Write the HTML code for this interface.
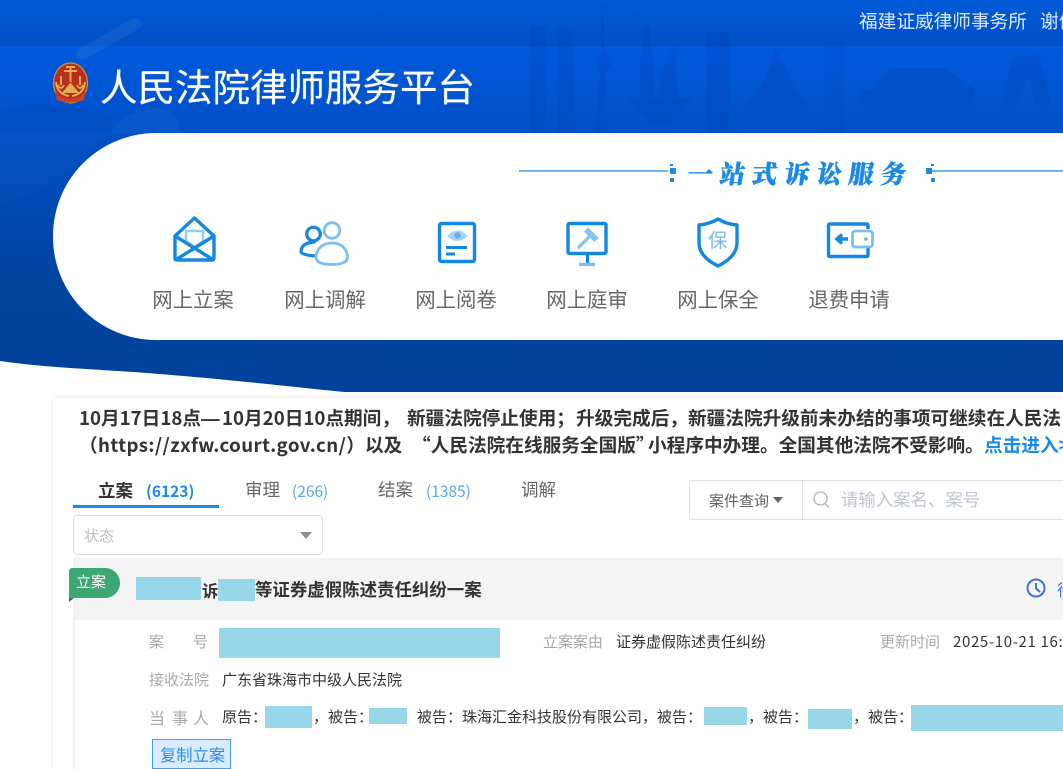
<!DOCTYPE html>
<html lang="zh-CN"><head><meta charset="utf-8"><title>人民法院律师服务平台</title>
<style>
html,body{margin:0;padding:0;background:#fff;width:1063px;height:769px;overflow:hidden}
#w{position:relative;width:1063px;height:769px;overflow:hidden;font-family:"Liberation Sans","Noto Sans CJK SC",sans-serif;color:#333;filter:blur(.35px)}
.a{position:absolute}
.t{position:absolute;white-space:nowrap;line-height:24px;font-family:"Noto Sans CJK SC","Liberation Sans",sans-serif}
.r{position:absolute;background:#97d7e9}
.l{font-size:20.4px;color:#666;top:286px;width:100px;text-align:center}
.g{color:#a9a9a9;font-size:15px}
.d{color:#333;font-size:15px}
.n{font-size:18.67px;font-weight:700;color:#333}
</style></head><body><div id="w">
<svg class="a" style="left:0;top:0" width="1063" height="400" viewBox="0 0 1063 400">
<defs>
<linearGradient id="b1" x1="0" y1="0" x2="0" y2="1"><stop offset="0" stop-color="#005ad8"/><stop offset="1" stop-color="#004fc6"/></linearGradient>
<linearGradient id="b2" x1="0" y1="0" x2="0" y2="1"><stop offset="0" stop-color="#0059dc"/><stop offset=".28" stop-color="#004fc4"/><stop offset=".65" stop-color="#00449f"/><stop offset="1" stop-color="#00429a"/></linearGradient>
</defs>
<path d="M0 46H1063V392H345C300 388 230 379 133 372C90 369 40 367 0 361Z" fill="url(#b2)"/>
<rect width="1063" height="46" fill="url(#b1)"/>
<path d="M0 205Q60 190 120 120L0 120Z" fill="#fff" opacity=".015"/>
<path d="M82 54L135 24" stroke="#fff" stroke-opacity=".06" stroke-width="12" stroke-linecap="round"/>
<path d="M110 133C120 118 140 108 160 108C175 112 180 122 178 133Z" fill="#fff" opacity=".035"/>
<path d="M0 133V112Q60 95 112 120V133Z" fill="#003c9c" opacity=".14"/>
<g fill="#002f9a" opacity=".13">
<rect x="530" y="25" width="15" height="108"/><path d="M557 26L572 32L576 133H558Z"/>
<path d="M602 5L604 5L605 50Q612 55 610 66L605 72L608 133H595L600 72Q593 60 601 50Z"/>
<path d="M640 70L644 25L649 25L654 70L653 105H640Z"/><path d="M660 75L675 45L678 115H660Z"/>
<path d="M628 98H692L672 122H650Z"/><rect x="707" y="32" width="22" height="100"/>
<path d="M775 50L770 65L760 90L745 105H810L795 90L785 65Z"/>
<path d="M825 42H844V133H825Z" opacity=".6"/><path d="M872 90L890 68H945L975 90V105H860V90Z"/>
<path d="M1000 105L1013 57L1040 55L1050 105H1035L1030 75L1015 105Z"/>
</g>
<rect x="53" y="133" width="1200" height="207" rx="103" fill="#fff"/>
<!-- emblem -->
<ellipse cx="70.500" cy="83" rx="17" ry="20" fill="#b8301c" stroke="#c9923c" stroke-width="1.200"/>
<path d="M55 92Q70 106 86 92L84 100Q70 105 57 100Z" fill="#c9402a"/>
<g stroke="#e2ad55" stroke-width="1.900" fill="none"><path d="M70.500 66V82M64 71H77M66 67H75"/><path d="M61 76V85M80 76V85"/><path d="M58 85Q61 91 64 85M77 85Q80 91 83 85"/><path d="M64 92L70.500 84L77 92Z" fill="#e2ad55"/><path d="M56 82Q57 94 69 96M85 82Q84 94 72 96"/></g>
<!-- divider -->
<g stroke="#1a8ae6" stroke-width="1.300"><path d="M519 171H668M928 171H1063"/></g>
<g fill="#1a8ae6"><rect x="670" y="168" width="6" height="6"/><rect x="670" y="178" width="4" height="4"/><rect x="670" y="164" width="3" height="2"/><rect x="926" y="168" width="6" height="6"/><rect x="931" y="178" width="4" height="4"/><rect x="931" y="164" width="3" height="2"/></g>
<!-- envelope -->
<path d="M186 241V231H203V241L194.500 247Z" fill="#fff" stroke="#95cdf8" stroke-width="2.500"/>
<g fill="none" stroke="#1488e0" stroke-width="3.400" stroke-linejoin="round" stroke-linecap="round"><path d="M175 236L194.500 218L214 236V258Q214 260 212 260H177Q175 260 175 258Z"/><path d="M175 236L212 259M214 236L177 259"/></g>
<!-- people -->
<circle cx="313.500" cy="234" r="6.800" fill="none" stroke="#1488e0" stroke-width="3.200"/>
<path d="M314 242Q301 243 301 252Q302 255 316 256" fill="none" stroke="#1488e0" stroke-width="3.200" stroke-linecap="round"/>
<circle cx="332" cy="230.500" r="7.800" fill="#fff" stroke="#79bff7" stroke-width="2.800"/>
<path d="M332 243C320 243 316 252 316 257C316 262 321 264.500 332 264.500C343 264.500 347.500 262 347.500 257C347.500 252 344 243 332 243Z" fill="#fff" stroke="#79bff7" stroke-width="2.800"/>
<!-- doc -->
<rect x="439.500" y="223.500" width="35" height="38" rx="2" fill="none" stroke="#1488e0" stroke-width="3.400"/>
<path d="M447 236Q457 225 468 236Q457 246 447 236Z" fill="#a6d5fa"/><circle cx="457.500" cy="235.500" r="3.200" fill="#5fb0f2"/>
<path d="M446 247.500H467" stroke="#1488e0" stroke-width="3"/><path d="M446 254H455" stroke="#1488e0" stroke-width="3"/>
<!-- monitor -->
<rect x="568" y="223.500" width="38" height="30" rx="1.500" fill="none" stroke="#1488e0" stroke-width="3.400"/>
<path d="M587.500 255V263" stroke="#1488e0" stroke-width="3"/><path d="M579 264.500H595" stroke="#79bff7" stroke-width="3.200"/>
<g stroke="#85c5f8" fill="none"><path d="M586 229.500L596.500 240" stroke-width="6"/><path d="M590 236L579 247" stroke-width="3.400" stroke-linecap="round"/></g>
<!-- shield -->
<path d="M718 219Q726 224 737 225V243C737 254 728 261 718 266C708 261 699 254 699 243V225Q710 224 718 219Z" fill="none" stroke="#1488e0" stroke-width="3.400" stroke-linejoin="round"/>
<text x="708" y="247" font-size="19.500" fill="#72baf6" font-family="Noto Sans CJK SC">保</text>
<!-- wallet -->
<path d="M868 229V225Q868 224 866 224H830Q828.500 224 828.500 226V255Q828.500 256.500 830 256.500H866Q868 256.500 868 255V248" fill="none" stroke="#1488e0" stroke-width="3.400"/>
<rect x="852.500" y="231" width="20" height="16" rx="3" fill="#fff" stroke="#79bff7" stroke-width="2.800"/>
<circle cx="866" cy="239" r="1.800" fill="#5fb0f2"/>
<path d="M848 239H838M842 234.500L837 239L842 243.500" fill="none" stroke="#1488e0" stroke-width="3.400"/>
</svg>

<div class="t" style="left:100px;top:61px;font-size:37.500px;line-height:48px;color:#fff;font-weight:400;text-shadow:0 0 .6px #fff">人民法院律师服务平台</div>
<div class="t" style="left:859px;top:9px;font-size:18.670px;color:#dbe8fa">福建证威律师事务所</div>
<div class="t" style="left:1040px;top:9px;font-size:18.670px;color:#dbe8fa">谢伟</div>
<div class="t" style="left:688px;top:158px;font-size:25px;line-height:30px;font-weight:900;color:#1a8ae6;letter-spacing:7.200px;font-family:'Noto Serif CJK SC',serif;transform:skewX(-8deg);-webkit-text-stroke:.5px #1a8ae6">一站式诉讼服务</div>

<div class="t l" style="left:143px">网上立案</div>
<div class="t l" style="left:275px">网上调解</div>
<div class="t l" style="left:406px">网上阅卷</div>
<div class="t l" style="left:537px">网上庭审</div>
<div class="t l" style="left:668px">网上保全</div>
<div class="t l" style="left:799px">退费申请</div>

<div class="a" style="left:53px;top:398px;width:1010px;height:371px;background:#fff;box-shadow:0 0 5px rgba(0,0,0,.1)"></div>
<div class="t n" style="left:79px;top:406px">10月17日18点<span style="font-family:'Liberation Sans';display:inline-block;width:21px">—</span>10月20日10点期间，</div>
<div class="t n" style="left:407px;top:406px">新疆法院停止使用；</div>
<div class="t n" style="left:576px;top:406px">升级完成后，新疆法院升级前未办结的事项可继续在人民法</div>
<div class="t n" style="left:79px;top:433px;letter-spacing:.4px">（https://zxfw.court.gov.cn/）</div>
<div class="t n" style="left:365px;top:433px">以及</div>
<div class="t n" style="left:412px;top:433px">“人民法院在线服务全国版”</div>
<div class="t n" style="left:648px;top:433px">小程序中办理。全国其他法院不受影响。</div>
<div class="t n" style="left:984px;top:433px;color:#1a8ae6">点击进入&gt;</div>

<div class="t" style="left:98px;top:479px;font-size:17.500px;font-weight:700;color:#333">立案</div>
<div class="t" style="left:146px;top:479px;font-size:15.500px;font-weight:700;color:#1a8ae6">(6123)</div>
<div class="a" style="left:73px;top:505px;width:146px;height:3px;background:#1a8ae6"></div>
<div class="t" style="left:245px;top:478px;font-size:17.500px;color:#666">审理</div>
<div class="t" style="left:292px;top:479px;font-size:15.500px;color:#5aa6e8">(266)</div>
<div class="t" style="left:378px;top:478px;font-size:17.500px;color:#666">结案</div>
<div class="t" style="left:426px;top:479px;font-size:15.500px;color:#5aa6e8">(1385)</div>
<div class="t" style="left:521px;top:478px;font-size:17.500px;color:#666">调解</div>

<div class="a" style="left:73px;top:515px;width:248px;height:38px;border:1px solid #dcdfe6;border-radius:4px;background:#fff"></div>
<div class="t" style="left:84px;top:524px;font-size:15px;color:#bdbdbd">状态</div>
<div class="a" style="left:300px;top:532px;width:0;height:0;border-left:6.500px solid transparent;border-right:6.500px solid transparent;border-top:7px solid #8b8f99"></div>

<div class="a" style="left:689px;top:480px;width:372px;height:38px;border:1px solid #dcdfe6;border-right:0;border-radius:4px 0 0 4px;background:#fff;width:374px"></div>
<div class="a" style="left:802px;top:481px;width:1px;height:38px;background:#dcdfe6"></div>
<div class="t" style="left:709px;top:489px;font-size:15px;color:#606266">案件查询</div>
<div class="a" style="left:773px;top:497px;width:0;height:0;border-left:5px solid transparent;border-right:5px solid transparent;border-top:6px solid #606266"></div>
<svg class="a" style="left:812px;top:490px" width="20" height="20"><circle cx="8.500" cy="8.500" r="6.500" fill="none" stroke="#aeb2b9" stroke-width="1.300"/><path d="M13 13.500L17 17.500" stroke="#aeb2b9" stroke-width="1.300"/></svg>
<div class="t" style="left:841px;top:488px;font-size:17.400px;color:#c0c4cc">请输入案名、案号</div>

<div class="a" style="left:73px;top:558px;width:990px;height:62px;background:#f4f4f4"></div>
<div class="a" style="left:73px;top:620px;width:2px;height:149px;background:#efefef"></div>
<div class="a" style="left:69px;top:568px;width:51px;height:30px;background:#3aa870;border-radius:3px 15px 15px 0"></div>
<div class="a" style="left:69px;top:598px;width:0;height:0;border-left:5px solid #1f7f50;border-bottom:4px solid transparent"></div>
<div class="t" style="left:76px;top:570px;font-size:15px;color:#fff">立案</div>
<div class="r" style="left:136px;top:577px;width:65px;height:23px"></div>
<div class="t" style="left:202px;top:578px;font-size:16.300px;font-weight:700;color:#333">诉</div>
<div class="r" style="left:218px;top:579px;width:37px;height:22px"></div>
<div class="t" style="left:255px;top:578px;font-size:17.460px;font-weight:700;color:#333">等证券虚假陈述责任纠纷一案</div>
<svg class="a" style="left:1025px;top:577px" width="22" height="22"><circle cx="11" cy="11" r="8.500" fill="none" stroke="#3f74dc" stroke-width="2"/><path d="M11 6V11.500L15 15" fill="none" stroke="#3f74dc" stroke-width="2"/></svg>
<div class="t" style="left:1057px;top:577px;font-size:16.300px;color:#3f74dc">待</div>

<div class="t g" style="left:149px;top:630px">案</div><div class="t g" style="left:193px;top:630px">号</div>
<div class="r" style="left:219px;top:628px;width:281px;height:30px"></div>
<div class="t g" style="left:543px;top:630px">立案案由</div>
<div class="t d" style="left:616px;top:630px">证券虚假陈述责任纠纷</div>
<div class="t g" style="left:880px;top:630px">更新时间</div>
<div class="t d" style="left:953px;top:630px;letter-spacing:.65px">2025-10-21 16:</div>
<div class="t g" style="left:149px;top:668px">接收法院</div>
<div class="t d" style="left:222px;top:668px">广东省珠海市中级人民法院</div>
<div class="t g" style="left:149px;top:705px;font-size:16px">当</div><div class="t g" style="left:172px;top:705px;font-size:16px">事</div><div class="t g" style="left:193px;top:705px;font-size:16px">人</div>
<div class="t d" style="left:222px;top:705px">原告：</div>
<div class="t d" style="left:313px;top:705px">，被告：</div>
<div class="t d" style="left:417px;top:705px">被告：珠海汇金科技股份有限公司，被告：</div>
<div class="t d" style="left:748px;top:705px">，被告：</div>
<div class="t d" style="left:853px;top:705px">，被告：</div>
<div class="r" style="left:265px;top:706px;width:47px;height:22px"></div>
<div class="r" style="left:369px;top:708px;width:38px;height:16px"></div>
<div class="r" style="left:704px;top:707px;width:43px;height:18px"></div>
<div class="r" style="left:808px;top:709px;width:44px;height:20px"></div>
<div class="r" style="left:911px;top:705px;width:152px;height:26px"></div>
<div class="a" style="left:152px;top:739px;width:77px;height:28px;background:#d9ecff;border:1px solid #3f9fe8"></div>
<div class="t" style="left:160px;top:742px;font-size:16.300px;color:#2a8fe8">复制立案</div>
</div></body></html>
